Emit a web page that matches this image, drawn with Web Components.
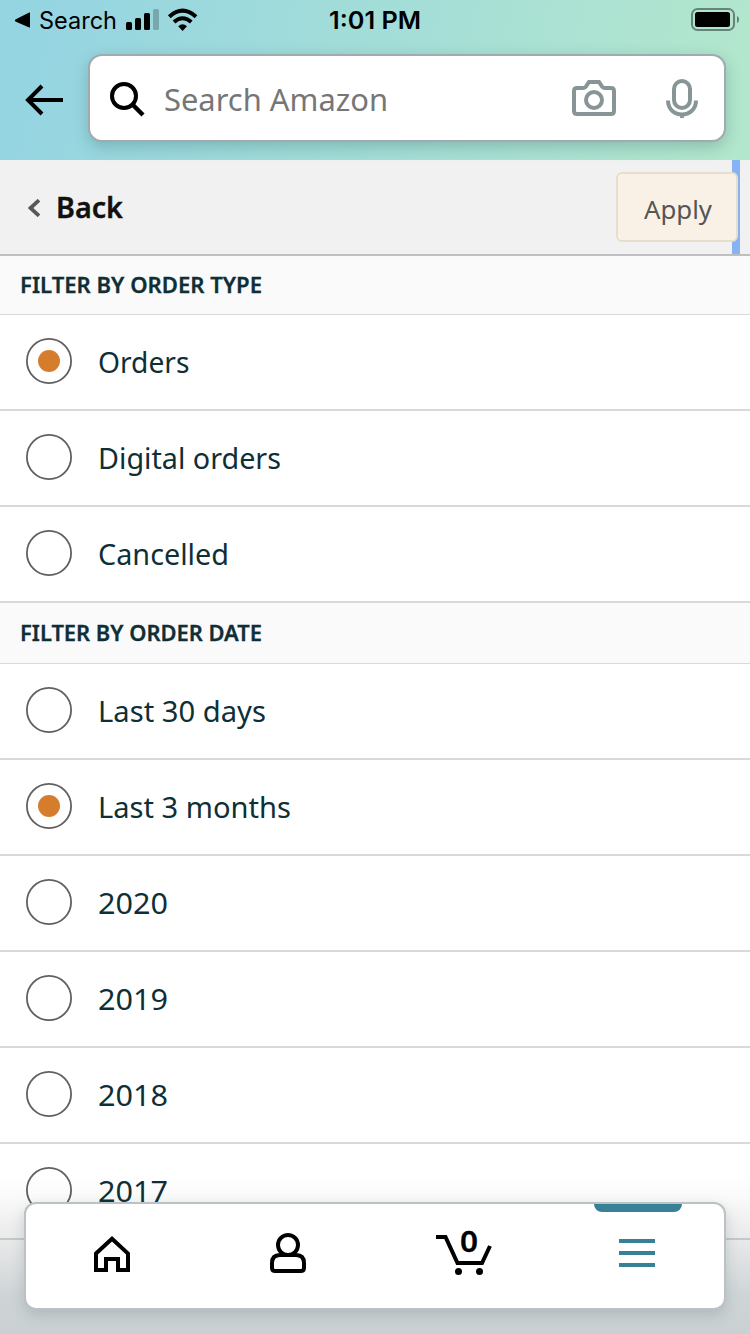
<!DOCTYPE html>
<html lang="en"><head><meta charset="utf-8"><title>Filter orders</title>
<style>
html,body{margin:0;width:750px;height:1334px;overflow:hidden;background:#fff;font-family:"Noto Sans","Open Sans",sans-serif}
</style></head><body>
<order-app></order-app>
<script>
const define=(name,html,setup)=>customElements.define(name,class extends HTMLElement{
  connectedCallback(){
    if(this.shadowRoot)return;
    const t=document.createElement('template');t.innerHTML=html;
    this.attachShadow({mode:'open'}).append(t.content.cloneNode(true));
    if(setup)setup.call(this);
  }
});

/* One line of text, condensed or expanded to the width in its "w" attribute. */
define('fit-text',`<style>:host{display:block;white-space:nowrap;line-height:1.362}
span{display:inline-block;transform-origin:0 50%}</style><span></span>`,function(){
  const s=this.shadowRoot.querySelector('span');s.textContent=this.getAttribute('text');
  const w=+this.getAttribute('w');
  this.style.width=w+'px';
  s.style.transform=`scaleX(${w/s.getBoundingClientRect().width})`;
});

define('status-bar',`<style>:host{display:flex;height:40px;align-items:center;font:24px Inter,sans-serif;color:#000}
svg{display:block;flex:none}fit-text{padding-top:2px}.a{margin-left:14px}.s{margin-left:9px}.g{margin-left:9px}.t{font-weight:600;margin-left:131px}.b{margin-left:270px}</style>
<svg class="a" width="16" height="16" viewBox="0 0 16 16"><path d="M16 1v14q0 .8-.8.4L1.400 9.400Q.2 8.500 1.400 7.600L15.200.6q.8-.4.8.4Z"/></svg>
<fit-text class="s" text="Search" w="78"></fit-text>
<svg class="g" width="72" height="24" viewBox="0 0 72 24"><rect y="14" width="6" height="8" rx="1.500"/><rect x="9" y="10" width="6" height="12" rx="1.500"/><rect x="18" y="5" width="6" height="17" rx="1.500"/><rect x="27" y="1" width="6" height="21" rx="1.500" opacity=".22"/>
<g fill="none" stroke="#000" stroke-width="4"><path d="M43.300 8.700Q56.500-3.300 70 8.700"/><path d="M48 14Q56.500 6.500 65.300 14"/></g><path d="M52.200 18.200q4.300-3.800 8.800 0L56.600 23Z"/></svg>
<fit-text class="t" text="1:01 PM" w="92"></fit-text>
<svg class="b" width="50" height="24" viewBox="0 0 50 24"><rect x="1" y="1" width="42" height="21" rx="5.500" fill="none" stroke="#000" stroke-opacity=".42" stroke-width="2"/><rect x="4" y="4" width="35" height="15" rx="2.500"/><path d="M46 8q2 .8 2 3.500T46 15Z" opacity=".45"/></svg>`);

define('search-header',`<style>:host{display:block;height:160px;background:linear-gradient(105deg,#95d5e2 5%,#b2e6cd 95%)}
.row{display:flex;align-items:center;height:88px;margin-top:14px}
svg{display:block;flex:none}.back{margin:3px 25px 0 25px}
.box{box-sizing:border-box;width:638px;height:88px;background:#fff;border:2px solid #a0aaaf;border-radius:14px;display:flex;align-items:center;box-shadow:0 5px 15px rgba(40,90,90,.28)}
fit-text{font-size:31px;color:#767676;margin:2px 0 0 18px}</style>
<status-bar></status-bar>
<div class="row"><svg class="back" width="38" height="32" viewBox="0 0 38 32" fill="none" stroke="#000" stroke-width="4"><path d="M38 16H3M17 2 3 16l14 14"/></svg>
<div class="box"><svg style="margin:2px 0 0 18px" width="38" height="38" viewBox="0 0 38 38" fill="none" stroke="#000" stroke-width="4"><circle cx="16" cy="16" r="12"/><path d="m24.500 24.500 10.500 10.500" stroke-width="4.400"/></svg>
<fit-text text="Search Amazon" w="224"></fit-text>
<svg style="margin-left:184px" width="44" height="36" viewBox="0 0 44 36" fill="none" stroke="#879596" stroke-width="4"><path d="M5 8h6.500q1.500 0 2.400-1.300L17 2h10l3.100 4.700Q31 8 32.500 8H39q3 0 3 3v20q0 3-3 3H5q-3 0-3-3V11q0-3 3-3Z"/><circle cx="22" cy="20" r="8"/></svg>
<svg style="margin:2px 0 0 50px" width="32" height="40" viewBox="0 0 32 40" fill="none" stroke="#879596" stroke-width="4"><rect x="8" y="2" width="16" height="27" rx="8"/><path d="M2 21.500C2 40 30 40 30 21.500M16 34v5"/></svg>
</div></div>`);

define('back-bar',`<style>:host{box-sizing:border-box;display:flex;align-items:center;height:96px;background:linear-gradient(90deg,transparent 732px,#87b3f4 732px 740px,transparent 740px) #f1f1f1;border-bottom:2px solid #bfbfbf}
.ch{margin:2px 15px 0 28px}.b{font-weight:600;font-size:29.500px;color:#111;margin-top:1px;-webkit-text-stroke:.4px #111}
button{box-sizing:border-box;width:122px;height:70px;margin:0 0 0 493px;padding:4px 0 0 26px;border:2px solid #e7dfcc;border-radius:6px;background:#f9f1e5;color:#555;font:25.500px "Noto Sans",sans-serif;text-align:left}</style>
<svg class="ch" width="13" height="18" viewBox="0 0 13 18" fill="none" stroke="#585858" stroke-width="3.800"><path d="M11 1.200 2.500 9l8.500 7.800"/></svg>
<fit-text class="b" text="Back" w="67"></fit-text><button><fit-text text="Apply" w="68"></fit-text></button>`);

define('filter-heading',`<style>:host{box-sizing:border-box;display:flex;align-items:center;padding-left:20px;background:#fafafa;border-bottom:1px solid #d5dbdb;color:#0f2f37;font-size:21px;font-weight:600;-webkit-text-stroke:.3px #0f2f37}
:host([first]){height:59px;padding-bottom:1px}:host(:not([first])){height:61px}slot{display:block;padding-top:1px}</style><slot></slot>`);

define('filter-option',`<style>:host{box-sizing:border-box;display:flex;align-items:center;height:96px;padding:0 0 2px 26px;background:#fff;border-bottom:2px solid #d5dbdb;color:#0f2f37;font-size:29.500px}
i{box-sizing:border-box;width:46px;height:46px;display:grid;place-items:center;margin-right:26px}
svg{display:block}.dot{display:none}:host([checked]) .dot{display:block}slot{display:block;padding-top:3px}</style>
<i><svg width="46" height="46" viewBox="0 0 46 46"><circle cx="23" cy="23" r="22.100" fill="none" stroke="#606060" stroke-width="1.800"/><circle class="dot" cx="23" cy="23" r="11" fill="#d67d2d"/></svg></i><slot></slot>`);

define('bottom-nav',`<style>:host{position:absolute;left:0;bottom:0;width:750px;height:160px;box-sizing:border-box;padding:28px 24px 0;background:linear-gradient(rgba(0,0,0,0),rgba(0,0,0,.02) 14%,rgba(0,5,5,.055) 28%,rgba(5,15,20,.1) 45%,rgba(15,45,55,.2) 75%,rgba(15,45,55,.225))}
nav{box-sizing:border-box;height:108px;width:702px;border:2px solid #bbc1c4;border-radius:12px;background:#fff;display:grid;grid-template-columns:172px 180px 172px 1fr;justify-items:center;box-shadow:0 5px 14px rgba(70,90,95,.22)}
svg{display:block}.cell{position:relative}.num{position:absolute;left:24px;top:17px;font-size:29px;font-weight:600;-webkit-text-stroke:.3px #000;color:#000}
.menu{width:88px;left:1px}.menu:before{content:"";display:block;height:8px;background:#388095;border-radius:0 0 8px 8px}</style>
<nav><div class="cell"><svg style="margin-top:30px" width="38" height="38" viewBox="0 0 38 38" fill="none" stroke="#000" stroke-width="4"><path d="M3 19.500 19 4.700l16 14.800V36H25V25H13v11H3Z"/></svg></div>
<div class="cell"><svg style="margin-top:29px" width="36" height="40" viewBox="0 0 36 40" fill="none" stroke="#000" stroke-width="4"><circle cx="18" cy="12" r="10"/><path d="M10 22h16q8 0 8 8v5q0 3-3 3H5q-3 0-3-3v-5q0-8 8-8Z"/></svg></div>
<div class="cell"><svg style="margin-top:29px" width="56" height="44" viewBox="0 0 56 44"><path d="M0 4h9.500l12 26H46l8-17" fill="none" stroke="#000" stroke-width="4"/><circle cx="22.500" cy="38.500" r="3.500"/><circle cx="43.500" cy="38.500" r="3.500"/></svg><fit-text class="num" text="0" w="18"></fit-text></div>
<div class="cell menu"><svg style="margin:27px 0 0 25px" width="36" height="28" viewBox="0 0 36 28"><path d="M0 2h36M0 14h36M0 26h36" stroke="#388095" stroke-width="4"/></svg></div></nav>`);

define('order-app',`<style>:host{display:block;position:relative;width:750px;height:1334px;overflow:hidden}</style>
<search-header></search-header><back-bar></back-bar><main></main><bottom-nav></bottom-nav>`,function(){
  const main=this.shadowRoot.querySelector('main');
  const groups=[['FILTER BY ORDER TYPE',[['Orders',91.5,1],['Digital orders',183],['Cancelled',131]]],
    ['FILTER BY ORDER DATE',[['Last 30 days',168],['Last 3 months',193,1],['2020',70],['2019',70],['2018',70],['2017',70]]]];
  const line=(parent,text,w)=>{
    const f=document.createElement('fit-text');f.setAttribute('text',text);f.setAttribute('w',w);parent.append(f);
  };
  groups.forEach(([title,rows],n)=>{
    const h=document.createElement('filter-heading');if(!n)h.setAttribute('first','');
    main.append(h);line(h,title,242);
    for(const [label,w,on] of rows){
      const o=document.createElement('filter-option');if(on)o.setAttribute('checked','');
      main.append(o);line(o,label,w);
    }
  });
});
</script></body></html>
